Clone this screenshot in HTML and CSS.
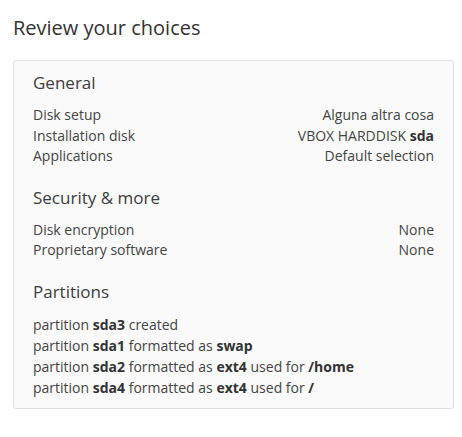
FILE: index.html
```html
<!DOCTYPE html>
<html>
<head>
<meta charset="utf-8">
<link rel="stylesheet" href="styles.css">
</head>
<body>
<main class="page">
  <h1 class="title">Review your choices</h1>
  <section class="card">
    <div class="group">
      <h2 class="group-title">General</h2>
      <div class="rows">
        <div class="row"><span>Disk setup</span><span>Alguna altra cosa</span></div>
        <div class="row"><span>Installation disk</span><span>VBOX HARDDISK <b>sda</b></span></div>
        <div class="row"><span>Applications</span><span>Default selection</span></div>
      </div>
    </div>
    <div class="group">
      <h2 class="group-title">Security &amp; more</h2>
      <div class="rows">
        <div class="row"><span>Disk encryption</span><span>None</span></div>
        <div class="row"><span>Proprietary software</span><span>None</span></div>
      </div>
    </div>
    <div class="group">
      <h2 class="group-title">Partitions</h2>
      <div class="rows">
        <div class="line">partition <b>sda3</b> created</div>
        <div class="line">partition <b>sda1</b> formatted as <b>swap</b></div>
        <div class="line">partition <b>sda2</b> formatted as <b>ext4</b> used for <b>/home</b></div>
        <div class="line">partition <b>sda4</b> formatted as <b>ext4</b> used for <b>/</b></div>
      </div>
    </div>
  </section>
</main>
</body>
</html>
```

FILE: styles.css
```css
html, body {
  margin: 0;
  padding: 0;
  background: #ffffff;
}
body {
  font-family: "Open Sans", "Noto Sans", sans-serif;
  color: #444444;
}
.page {
  padding: 14px 8px 0 13px;
}
.title {
  margin: 0 0 18px 0;
  font-size: 20px;
  font-weight: 400;
  line-height: 28px;
  color: #333333;
}
.card {
  background: #fafafa;
  border: 1px solid #dedede;
  border-radius: 3px;
  padding: 10px 19px 10px 19px;
  display: flex;
  flex-direction: column;
  gap: 19px;
}
.group-title {
  margin: 0 0 10px 0;
  font-size: 17px;
  font-weight: 400;
  line-height: 24px;
  color: #3d3d3d;
}
.row {
  display: flex;
  justify-content: space-between;
  font-size: 14px;
  line-height: 20.5px;
}
.line {
  font-size: 14px;
  line-height: 21px;
}
b {
  font-weight: 700;
  color: #333333;
}
```
